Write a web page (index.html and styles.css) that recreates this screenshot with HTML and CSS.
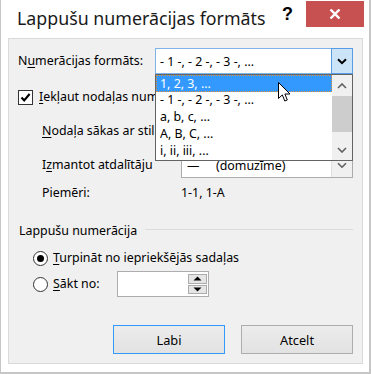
FILE: index.html
```html
<!DOCTYPE html>
<html lang="lv">
<head>
<meta charset="utf-8">
<link rel="stylesheet" href="styles.css">
</head>
<body>
<div class="window">
  <div class="titlebar">
    <div class="title">Lappušu numerācijas formāts</div>
    <div class="help">?</div>
    <div class="close">
      <svg width="12" height="10" viewBox="0 0 12 10"><path d="M1.5 0.5 L10.5 9.5 M10.5 0.5 L1.5 9.5" stroke="#fff" stroke-width="2.4" fill="none"/></svg>
    </div>
  </div>
  <div class="panel">
    <div class="row r1">
      <span class="lbl w1">N<u>u</u>merācijas formāts:</span>
      <div class="combo c1 focused">
        <span class="ctext">- 1 -, - 2 -, - 3 -, ...</span>
        <span class="cbtn active"><svg width="10" height="7" viewBox="0 0 10 7"><path d="M1 1.2 L5 5.2 L9 1.2" stroke="#000" stroke-width="2" fill="none"/></svg></span>
      </div>
    </div>
    <div class="row r2">
      <span class="check"><svg width="13" height="13" viewBox="0 0 13 13"><path d="M2.5 6.5 L5.2 9.4 L10.6 3" stroke="#000" stroke-width="2.2" fill="none"/></svg></span>
      <span class="lbl"><u>I</u>ekļaut nodaļas numuru</span>
    </div>
    <div class="row r3 indent">
      <span class="lbl w2 clip2"><u>N</u>odaļa sākas ar stilu</span>
      <div class="combo c2">
        <span class="ctext"></span>
        <span class="cbtn"><svg width="10" height="7" viewBox="0 0 10 7"><path d="M1 1.2 L5 5.2 L9 1.2" stroke="#606060" stroke-width="1.6" fill="none"/></svg></span>
      </div>
    </div>
    <div class="row r4 indent">
      <span class="lbl w2">I<u>z</u>mantot atdalītāju</span>
      <div class="combo c2">
        <span class="ctext"><span class="dash">—</span>(domuzīme)</span>
        <span class="cbtn"><svg width="10" height="7" viewBox="0 0 10 7"><path d="M1 1.2 L5 5.2 L9 1.2" stroke="#606060" stroke-width="1.6" fill="none"/></svg></span>
      </div>
    </div>
    <div class="row r5 indent">
      <span class="lbl w2">Piemēri:</span>
      <span class="lbl">1-1, 1-A</span>
    </div>
    <div class="group">
      <span class="lbl">Lappušu numerācija</span>
      <span class="gline"></span>
    </div>
    <div class="row r6 indent2">
      <span class="radio on"><span class="dot"></span></span>
      <span class="lbl"><u>T</u>urpināt no iepriekšējās sadaļas</span>
    </div>
    <div class="row r7 indent2">
      <span class="radio"></span>
      <span class="lbl w3"><u>S</u>ākt no:</span>
      <div class="spin">
        <span class="sfield"></span>
        <span class="sbtns">
          <span class="sbtn"><svg width="9" height="5" viewBox="0 0 9 5"><path d="M0.5 4.5 L4.5 0.5 L8.5 4.5 Z" fill="#000"/></svg></span>
          <span class="sbtn"><svg width="9" height="5" viewBox="0 0 9 5"><path d="M0.5 0.5 L4.5 4.5 L8.5 0.5 Z" fill="#000"/></svg></span>
        </span>
      </div>
    </div>
    <div class="buttons">
      <span class="btn default">Labi</span>
      <span class="btn">Atcelt</span>
    </div>

    <div class="droplist">
      <div class="items">
        <div class="item sel">1, 2, 3, ...</div>
        <div class="item">- 1 -, - 2 -, - 3 -, ...</div>
        <div class="item">a, b, c, ...</div>
        <div class="item">A, B, C, ...</div>
        <div class="item">i, ii, iii, ...</div>
      </div>
      <div class="scrollbar">
        <span class="sarrow"><svg width="10" height="6" viewBox="0 0 10 6"><path d="M1 5 L5 1 L9 5" stroke="#606060" stroke-width="1.6" fill="none"/></svg></span>
        <span class="thumbarea"><span class="thumb"></span></span>
        <span class="sarrow"><svg width="10" height="6" viewBox="0 0 10 6"><path d="M1 1 L5 5 L9 1" stroke="#606060" stroke-width="1.6" fill="none"/></svg></span>
      </div>
    </div>
    <svg class="cursor" width="13" height="21" viewBox="0 0 13 21"><path d="M0.5 0.5 L0.5 16.5 L4.3 12.9 L6.8 19 L9.3 18 L6.9 12 L12 12 Z" fill="#fff" stroke="#000" stroke-width="1"/></svg>
  </div>
</div>
</body>
</html>
```

FILE: styles.css
```css
* { box-sizing: border-box; }
html, body { margin: 0; padding: 0; background: #fff; }
body {
  width: 371px; height: 374px; overflow: hidden;
  font-family: "Noto Sans", "Open Sans", sans-serif;
  font-size: 12.4px; color: #000;
}
u { text-decoration: underline; text-underline-offset: 2px; }
.window {
  width: 371px; height: 374px;
  border-left: 1px solid #c6c6c6;
  border-right: 2px solid #c6c6c6;
  border-bottom: 2px solid #c6c6c6;
  background: #fff;
}
.titlebar {
  height: 38px; position: relative;
  display: flex; align-items: flex-start;
}
.title {
  font-size: 17.8px; padding-left: 16px; padding-top: 6px; color: #1a1a1a;
  flex: 1;
}
.help {
  font-family: "Liberation Sans", sans-serif; font-weight: bold; font-size: 18px;
  margin-top: 4px; margin-right: 13px; color: #000;
}
.close {
  width: 58px; height: 26px; margin-top: 1px; margin-right: 5px;
  background: #c75050; display: flex; align-items: center; justify-content: center;
}
.panel {
  position: relative;
  margin: 0 6px 8px 7px;
  height: 326px;
  background: #f0f0f0;
  border: 1px solid #d9d9d9;
  padding: 9px 9px 8px 9px;
  display: flex; flex-direction: column;
}
.row { display: flex; align-items: center; }
.lbl { white-space: nowrap; line-height: 16px; }
.clip2 { overflow: hidden; }
.w1 { width: 137px; }
.w2 { width: 139px; }
.w3 { width: 64px; }
.indent { padding-left: 24px; }
.indent2 { padding-left: 15px; }
.r1 { height: 26px; }
.r2 { height: 20px; margin-top: 13px; }
.r3 { height: 26px; margin-top: 11px; }
.r4 { height: 26px; margin-top: 8px; }
.r5 { height: 16px; margin-top: 7px; }
.group { display: flex; align-items: center; margin-top: 22px; height: 16px; padding-left: 1px; }
.gline { flex: 1; height: 1px; background: #dcdcdc; margin-left: 8px; margin-top: -3px; }
.r6 { height: 16px; margin-top: 11px; }
.r7 { height: 26px; margin-top: 5px; }
.combo {
  height: 26px; background: #fff; border: 1px solid #acacac;
  display: flex; align-items: center; position: relative;
}
.c1 { width: 198px; }
.c2 { width: 172px; }
.combo.focused { border-color: #7eb4ea; }
.ctext { flex: 1; padding-left: 4px; white-space: nowrap; overflow: hidden; }
.dash { display: inline-block; width: 30px; padding-left: 1px; }
.cbtn {
  width: 21px; height: 24px; display: flex; align-items: center; justify-content: center;
  background: #f0f0f0; border-left: 1px solid #e0e0e0;
}
.cbtn.active { background: #cce4f7; border: 1px solid #569de5; height: 26px; margin: -1px -1px -1px 0; width: 22px; }
.check {
  width: 15px; height: 15px; border: 1px solid #333; background: #fff;
  display: flex; align-items: center; justify-content: center; margin-right: 6px;
}
.radio {
  width: 15px; height: 15px; border: 1px solid #333; border-radius: 50%; background: #fff;
  display: flex; align-items: center; justify-content: center; margin-right: 5px;
}
.radio .dot { width: 7px; height: 7px; border-radius: 50%; background: #000; }
.spin {
  width: 92px; height: 26px; border: 1px solid #adadad; background: #fff;
  display: flex; align-items: stretch; padding: 2px 1px 2px 0;
}
.sfield { flex: 1; }
.sbtns { width: 19px; display: flex; flex-direction: column; gap: 1px; }
.sbtn {
  flex: 1; background: #e5e5e5; border: 1px solid #acacac;
  display: flex; align-items: center; justify-content: center;
}
.buttons { display: flex; justify-content: flex-end; gap: 16px; margin-top: 28px; }
.btn {
  width: 112px; height: 29px; border: 1px solid #adadad; background: #e1e1e1;
  background: linear-gradient(#ececec, #e2e2e2);
  display: flex; align-items: center; justify-content: center; font-size: 12.8px;
}
.btn.default { border-color: #3399ff; }
.droplist {
  position: absolute; left: 146px; top: 35px;
  width: 198px; height: 87px;
  border: 1px solid #646464; background: #fff;
  display: flex;
}
.items { flex: 1; }
.item { height: 17px; line-height: 16px; padding-left: 4px; white-space: nowrap; }
.item.sel { background: #3399ff; color: #fff; border: 1px dotted #e0903a; padding-left: 3px; line-height: 15px; }
.scrollbar { width: 20px; background: #f0f0f0; display: flex; flex-direction: column; }
.sarrow { height: 21px; display: flex; align-items: center; justify-content: center; }
.thumbarea { flex: 1; }
.thumb { display: block; height: 36px; background: #cdcdcd; }
.cursor { position: absolute; left: 269px; top: 43px; }
```
